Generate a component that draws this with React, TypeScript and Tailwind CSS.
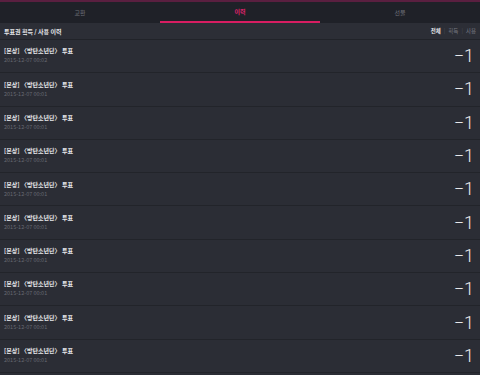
import React from "react";

const rows = [
  "2015-12-07 00:02",
  "2015-12-07 00:01",
  "2015-12-07 00:01",
  "2015-12-07 00:01",
  "2015-12-07 00:01",
  "2015-12-07 00:01",
  "2015-12-07 00:01",
  "2015-12-07 00:01",
  "2015-12-07 00:01",
  "2015-12-07 00:01",
];

export default function App() {
  return (
    <div
      className="w-[480px] h-[375px] overflow-hidden bg-[#2b2d35] flex flex-col"
      style={{ fontFamily: '"Noto Sans CJK KR", "Noto Sans", sans-serif' }}
    >
      <div className="h-[2px] bg-[#5a1f40]" />
      <div className="flex h-[21px] bg-[#1f2128]">
        <div className="flex-1 flex items-center justify-center text-[6px] text-[#6e7079]">교환</div>
        <div className="flex-1 flex items-center justify-center text-[6px] font-bold text-[#e0226c] border-b-2 border-[#d81d62]">이력</div>
        <div className="flex-1 flex items-center justify-center text-[6px] text-[#6e7079]">선물</div>
      </div>
      <div className="h-[17px] flex items-center justify-between pl-[4px] pr-[4px] bg-[#2c2e36] border-b border-[#212329]">
        <span className="text-[6px] font-bold text-[#e6e7ea]">투표권 획득 / 사용 이력</span>
        <div className="flex items-center gap-[3px] text-[5.5px]">
          <span className="font-bold text-[#e6e7ea]">전체</span>
          <span className="text-[#4a4c54]">|</span>
          <span className="text-[#777982]">획득</span>
          <span className="text-[#4a4c54]">|</span>
          <span className="text-[#777982]">사용</span>
        </div>
      </div>
      {rows.map((d, i) => (
        <div
          key={i}
          className="h-[33.3px] shrink-0 flex items-center justify-between pl-[4px] pr-[6px] border-b border-[#22242a] bg-[#2b2d35]"
        >
          <div className="flex flex-col justify-center leading-none gap-[4px]">
            <span className="text-[6px] font-bold text-[#e8e9ec]">[본상] 〈방탄소년단〉 투표</span>
            <span className="text-[5.5px] text-[#686a73]">{d}</span>
          </div>
          <span
            className="text-[18px] font-light text-[#eeeef0] leading-none"
            style={{ fontFamily: 'Roboto, "Noto Sans", sans-serif' }}
          >
            −1
          </span>
        </div>
      ))}
    </div>
  );
}
